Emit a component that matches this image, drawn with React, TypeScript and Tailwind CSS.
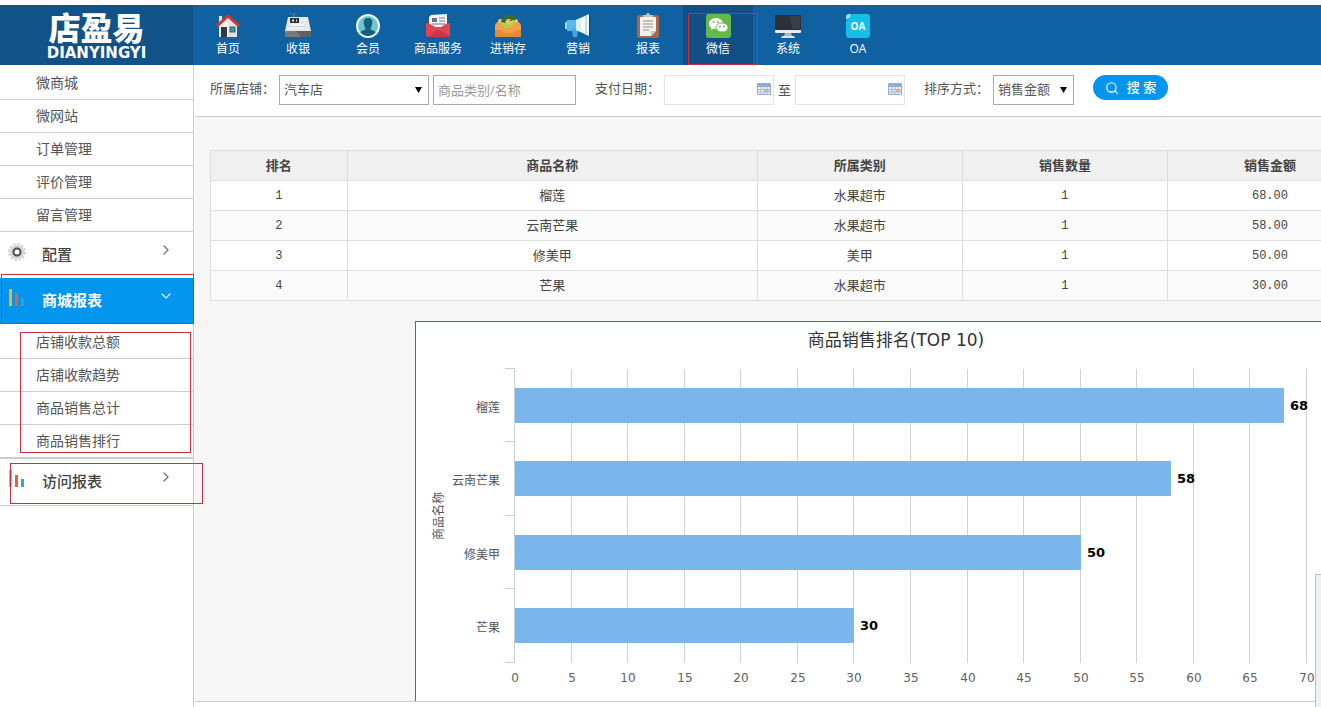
// src/App.tsx
import React from 'react';
import { ChevronDown, ChevronRight, Search } from 'lucide-react';

/* --- NAV ICONS --- */
const HomeIcon = () => (
  <svg viewBox="0 0 26 26" className="size-[26px]">
    <path d="M4 12 13 4l9 8v12H4z" fill="#f4f4f2" />
    <path d="M13 4l9 8v12h-9z" fill="#e2e4e4" />
    <path d="M4 3h3v6L4 11z" fill="#e9e9e9" />
    <path d="M13 1 1 12l2 2L13 5l10 9 2-2z" fill="#d8342f" />
    <rect x="6" y="14" width="6" height="10" fill="#33393f" />
    <rect x="15" y="14" width="5" height="5" fill="#2c9ba5" stroke="#556" strokeWidth="1" />
  </svg>
);

const CashierIcon = () => (
  <svg viewBox="0 0 28 26" className="h-[26px] w-7">
    <path d="M6 0h7v1h-2v4H9V1H6z" fill="#5d6b78" />
    <path d="M4 4h20l3 14H1z" fill="#e4e7ea" />
    <rect x="6" y="5" width="9" height="5" fill="#27323c" />
    <path d="M8 7.500h2m2 0h1" stroke="#dfe6ea" strokeWidth="2" />
    <path d="M17 7h5M6 12h14M5 15h15" stroke="#fff" strokeWidth="1" />
    <path d="M5 13.500h16" stroke="#cdd2d6" strokeWidth="1" />
    <path d="M1 18h26v6H1z" fill="#77797d" />
    <path d="M12 18h15v6H17z" fill="#5f6165" />
  </svg>
);

const MemberIcon = () => (
  <svg viewBox="0 0 26 26" className="size-[26px]">
    <circle cx="13" cy="13" r="12" fill="#e9f8f8" />
    <circle cx="13" cy="13" r="10" fill="#6fc6cc" />
    <path d="M13 5c4 0 5 3 4 7-.5 2-1.500 2.500-1.500 4 1 1.500 4 1.200 5 3.500A10 10 0 0 1 5.500 19.500c1-2.300 4-2 5-3.500 0-1.500-1-2-1.500-4-1-4 0-7 4-7z" fill="#14607f" />
  </svg>
);

const ServiceIcon = () => (
  <svg viewBox="0 0 26 26" className="size-[26px]">
    <path d="M2 11h22l-2-4H4z" fill="#a92c3a" />
    <path d="M6 2 22 1v16H4V4z" fill="#f4f4f4" />
    <path d="M7 5h5v4H7z" fill="#68717c" />
    <path d="M14 5h6m-6 3h6M7 11h13" stroke="#9aa2aa" strokeWidth="1.500" />
    <path d="M1 10c4 0 7 3 9 4h6c2-1 5-4 9-4v12q0 2-2 2H3q-2 0-2-2z" fill="#e34453" />
    <path d="m3 24 9-7h3l9 6-1 1z" fill="#cf3545" />
  </svg>
);

const StockIcon = () => (
  <svg viewBox="0 0 28 26" className="h-[26px] w-7">
    <path d="M5 6h18l4 9H1z" fill="#f2c27a" />
    <path d="M1 13q0-3 3-4l4 1c2 6 10 6 12 0l4-1q3 1 3 4v9q0 2-2 2H3q-2 0-2-2z" fill="#f0a04b" />
    <path d="M1 17h6q1 3 3 3h9q2 0 3-3h5v5q0 2-2 2H3q-2 0-2-2z" fill="#e58a35" />
    <path d="M7 9c1-6 7-9 12-6l1-2 2 6-7 1 2-2c-3-1-5 0-6 4z" fill="#356d35" />
    <path d="M21 7c1 5-4 8-9 7l-1 2-3-5 6-2-1 2c3 1 5-1 5-4z" fill="#b8ce3c" />
  </svg>
);

const MarketingIcon = () => (
  <svg viewBox="0 0 28 26" className="h-[26px] w-7">
    <path d="M1 9h3v7H1z" fill="#8edcf2" />
    <path d="M3 7h9v11H3z" fill="#59b8e4" />
    <path d="M8 16h6l-1 8H9z" fill="#4aa4d6" />
    <path d="M12 7 25 1v22l-13-6z" fill="#f5fafc" />
    <path d="M12 7l5-2v14l-5-2z" fill="#d7eef8" />
    <path d="M25 1h1v22h-1z" fill="#28404f" />
    <path d="M22 3v19" stroke="#88c4dd" strokeWidth="1" />
  </svg>
);

const ReportIcon = () => (
  <svg viewBox="0 0 26 26" className="size-[26px]">
    <rect x="2" y="2" width="22" height="23" rx="2" fill="#a5684a" />
    <path d="M5 4h16v14l-5 5H5z" fill="#f2f0ea" />
    <path d="M21 18h-5v5z" fill="#cfcac0" />
    <path d="M8 4h10V2h-3q0-2-2-2t-2 2H8z" fill="#c9c4ba" />
    <path d="M8 8h10M8 11h10M8 14h10M8 17h6" stroke="#96918a" strokeWidth="1" />
  </svg>
);

const WechatIcon = () => (
  <svg viewBox="0 0 26 26" className="size-[26px]">
    <rect x="1" y="1" width="25" height="24" rx="3" fill="#62bb46" />
    <path d="M11 5c-4 0-7 2.500-7 5.500 0 2 1 3.500 2.500 4.500L6 17l2.500-1.300 2.500.3c4 0 7-2.500 7-5.500S15 5 11 5z" fill="#fff" />
    <path d="M17 10c-3.500 0-6 2-6 4.500s2.500 4.500 6 4.500l2-.3 2.200 1.300-.5-2c1.500-1 2.300-2 2.300-3.500 0-2.500-2.500-4.500-6-4.500z" fill="#fff" stroke="#62bb46" strokeWidth="1" />
    <g fill="#62bb46">
      <circle cx="8.500" cy="9" r="1" />
      <circle cx="13" cy="9" r="1" />
      <circle cx="15" cy="13.500" r="1" />
      <circle cx="19" cy="13.500" r="1" />
    </g>
  </svg>
);

const SystemIcon = () => (
  <svg viewBox="0 0 26 26" className="size-[26px]">
    <rect x="0" y="2" width="26" height="17" rx="1" fill="#2d3038" />
    <path d="M14 3h11v13H18z" fill="#3a3e48" />
    <path d="M0 17h26v2q0 1-1 1H1q-1 0-1-1z" fill="#e6eaec" />
    <path d="M10 20h6l1 3h-8z" fill="#aeb6bb" />
    <path d="M7 23h12l1 2H6z" fill="#dfe4e7" />
  </svg>
);

const OaIcon = () => (
  <svg viewBox="0 0 26 26" className="size-[26px]">
    <path d="M7 1h15q3 0 3 3v18q0 3-3 3H4q-3 0-3-3V8z" fill="#12c0e8" />
    <path d="M1 6.500V4q0-3 3-3h2q0 4-5 5.500z" fill="#8fe6f6" />
    <text x="13" y="17" textAnchor="middle" fontSize="10" fontWeight="700" fill="#fff">
      OA
    </text>
  </svg>
);

/* --- SMALL ICONS --- */
const GearIcon = () => (
  <svg viewBox="0 0 18 18" className="mb-1 size-[18px]">
    <circle cx="9" cy="9" r="7" fill="#d3d3d6" />
    <circle cx="9" cy="9" r="8" fill="none" stroke="#d3d3d6" strokeWidth="2" strokeDasharray="2.500 1.690" />
    <circle cx="9" cy="9" r="3.500" fill="#fff" stroke="#4a4d55" strokeWidth="2" />
  </svg>
);

const BarsIcon = () => (
  <svg viewBox="0 0 18 18" className="mb-1 size-[18px]">
    <rect x="1" y="0" width="3" height="17" fill="#f0b323" />
    <rect x="7" y="5" width="3" height="12" fill="#e8603c" />
    <rect x="13" y="9" width="3" height="8" fill="#3a9fd0" />
  </svg>
);

const CalendarIcon = () => (
  <svg viewBox="0 0 14 12" className="pointer-events-none absolute top-2 right-[3px] h-3 w-3.5">
    <rect width="14" height="12" rx="1" fill="#93abcf" />
    <rect x="1" y="4" width="12" height="7" fill="#eef3f9" />
    <path d="M1 6.500h12M1 9h12M4 4v7M7 4v7M10 4v7" stroke="#a9bbd6" strokeWidth="1" />
    <rect x="8" y="7" width="4" height="2" fill="#e8a39c" />
  </svg>
);

/* --- DATA --- */
const NAV = [
  { label: '首页', icon: <HomeIcon /> },
  { label: '收银', icon: <CashierIcon /> },
  { label: '会员', icon: <MemberIcon /> },
  { label: '商品服务', icon: <ServiceIcon /> },
  { label: '进销存', icon: <StockIcon /> },
  { label: '营销', icon: <MarketingIcon /> },
  { label: '报表', icon: <ReportIcon /> },
  { label: '微信', icon: <WechatIcon />, active: true },
  { label: '系统', icon: <SystemIcon /> },
  { label: 'OA', icon: <OaIcon /> },
];

const SHOP_LINKS = ['微商城', '微网站', '订单管理', '评价管理', '留言管理'];
const REPORT_LINKS = ['店铺收款总额', '店铺收款趋势', '商品销售总计', '商品销售排行'];

const ROWS = [
  { name: '榴莲', category: '水果超市', count: 1, amount: 68 },
  { name: '云南芒果', category: '水果超市', count: 1, amount: 58 },
  { name: '修美甲', category: '美甲', count: 1, amount: 50 },
  { name: '芒果', category: '水果超市', count: 1, amount: 30 },
];

/* --- SIDEBAR PARTS --- */
const SubLink: React.FC<{ label: string }> = ({ label }) => (
  <li>
    <a href="#" className="flex h-[33px] items-center border-b border-[#ccc] pl-9 text-sm text-[#555]">
      {label}
    </a>
  </li>
);

const GroupLink: React.FC<{ label: string; icon: React.ReactNode; open?: boolean }> = ({ label, icon, open }) => (
  <a
    href="#"
    className={
      open
        ? 'flex h-[46px] items-center bg-[#0495ee] pr-[19px] pb-0.5 pl-2 text-[15px] font-bold text-white'
        : 'flex h-[46px] items-center pr-[19px] pb-0.5 pl-2 text-[15px] font-medium text-[#444]'
    }
  >
    {icon}
    <span className="ml-4 flex-1">{label}</span>
    {open ? (
      <ChevronDown className="mb-2 size-4 text-white/80" strokeWidth={2} />
    ) : (
      <ChevronRight className="mb-2 size-4 text-[#777]" strokeWidth={2} />
    )}
  </a>
);

/* --- FILTER PARTS --- */
const DateField: React.FC<{ label: string }> = ({ label }) => (
  <span className="relative">
    <input type="text" aria-label={label} className="h-[30px] w-[110px] border border-[#e1e4ec] bg-white px-1 outline-none" />
    <CalendarIcon />
  </span>
);

const SelectArrow = () => (
  <svg viewBox="0 0 8 8" className="pointer-events-none absolute top-[11px] right-1.5 size-2">
    <path d="M0 1h7L3.500 7z" fill="#000" />
  </svg>
);

/* --- CHART --- */
const ZERO_X = 99;
const UNIT = 11.314;
const TOP_Y = 47;
const BAND = 73.5;

const SalesChart = () => {
  const ticks = Array.from({ length: 15 }, (_, i) => i * 5);
  return (
    <svg width="960" height="379" className="block" fontFamily="'DejaVu Sans', 'Noto Sans CJK SC', sans-serif">
      <text x="480" y="24" textAnchor="middle" fontSize="17" fill="#333">
        商品销售排名(TOP 10)
      </text>
      <text x="27" y="194" textAnchor="middle" fontSize="12" fill="#555" transform="rotate(-90 27 194)">
        商品名称
      </text>
      {ticks.map((t) => (
        <g key={t}>
          <path
            d={`M${Math.round(ZERO_X + t * UNIT) - 0.5} ${TOP_Y}v294`}
            stroke={t === 0 ? '#c0d0e0' : '#d0d0d0'}
            shapeRendering="crispEdges"
          />
          <text x={Math.round(ZERO_X + t * UNIT)} y="360" textAnchor="middle" fontSize="12" fill="#606060">
            {t}
          </text>
        </g>
      ))}
      {[0, 1, 2, 3, 4].map((i) => (
        <path key={i} d={`M89 ${Math.floor(TOP_Y + i * BAND) - 0.5}h10`} stroke="#c0d0e0" />
      ))}
      {ROWS.map((row, i) => {
        const y = Math.floor(66 + i * BAND);
        const width = Math.round(row.amount * UNIT);
        return (
          <g key={row.name}>
            <rect x={ZERO_X} y={y} width={width} height="35" fill="#7cb5ec" />
            <text x="84" y={y + 24} textAnchor="end" fontSize="12" fill="#555">
              {row.name}
            </text>
            <text x={ZERO_X + width + 6} y={y + 22} fontSize="13" fontWeight="700" fill="#000">
              {row.amount}
            </text>
          </g>
        );
      })}
    </svg>
  );
};

const App: React.FC = () => {
  return (
    <div className="relative flex min-h-screen flex-col overflow-hidden bg-white pt-[5px] font-['Open_Sans','Noto_Sans_CJK_SC',sans-serif] text-[13px] text-[#555]">
      {/* --- HEADER --- */}
      <header className="flex h-[60px] bg-[#0f61a1] text-white">
        <a href="#" className="flex w-[193px] shrink-0 flex-col items-center justify-center gap-0.5 bg-[#115288] pt-1">
          <span className="text-[32px] leading-[30px] font-black">店盈易</span>
          <span className="font-['DejaVu_Sans',sans-serif] text-[15px] leading-4 font-bold">DIANYINGYI</span>
        </a>
        <nav className="flex">
          {NAV.map((item) => (
            <a
              key={item.label}
              href="#"
              className={
                item.active
                  ? 'relative flex w-[70px] flex-col items-center bg-[#114f86] pt-2 text-xs'
                  : 'flex w-[70px] flex-col items-center pt-2 text-xs'
              }
            >
              {item.icon}
              <span className="mt-0.5 leading-4">{item.label}</span>
              {item.active && <span className="absolute top-2 left-[5px] h-[52px] w-[70px] border border-[#c8303c]" />}
            </a>
          ))}
        </nav>
      </header>

      <div className="flex flex-1">
        {/* --- SIDEBAR --- */}
        <aside className="w-[194px] shrink-0 border-r border-[#ccc] pt-0.5">
          <ul>
            {SHOP_LINKS.map((label) => (
              <SubLink key={label} label={label} />
            ))}
          </ul>
          <GroupLink label="配置" icon={<GearIcon />} />
          <div className="relative">
            <GroupLink label="商城报表" icon={<BarsIcon />} open />
            <span className="pointer-events-none absolute -top-1 left-px h-[50px] w-[193px] border border-[#c8303c]" />
          </div>
          <div className="relative border-b border-[#ccc] pt-0.5">
            <ul>
              {REPORT_LINKS.map((label) => (
                <SubLink key={label} label={label} />
              ))}
            </ul>
            <span className="pointer-events-none absolute top-2 left-5 h-[121px] w-[171px] border border-[#c8303c]" />
          </div>
          <div className="relative border-b border-[#ccc]">
            <GroupLink label="访问报表" icon={<BarsIcon />} />
            <span className="pointer-events-none absolute top-1 left-2.5 h-[41px] w-[193px] border border-[#c8303c]" />
          </div>
        </aside>

        <main className="mb-[5px] ml-px min-w-0 flex-1 overflow-hidden border-b border-[#ccc] bg-[#f6f6f6]">
          {/* --- FILTER BAR --- */}
          <form className="flex h-[52px] items-start gap-[19px] border-b border-[#ccc] bg-white pt-2.5 pl-[15px] whitespace-nowrap">
            <div className="flex gap-1">
              <label htmlFor="shop" className="leading-[26px]">
                所属店铺：
              </label>
              <span className="relative">
                <select id="shop" className="h-[30px] w-[150px] appearance-none border border-[#a9a9a9] bg-white pl-1">
                  <option>汽车店</option>
                </select>
                <SelectArrow />
              </span>
              <input
                type="text"
                aria-label="商品类别/名称"
                placeholder="商品类别/名称"
                className="h-[30px] w-[143px] border border-[#a9a9a9] bg-white px-1 outline-none placeholder:text-[#999]"
              />
            </div>
            <div className="flex gap-1">
              <span className="leading-[26px]">支付日期：</span>
              <DateField label="开始日期" />
              <span className="leading-[30px]">至</span>
              <DateField label="结束日期" />
            </div>
            <div className="flex gap-1">
              <label htmlFor="sort" className="leading-[26px]">
                排序方式：
              </label>
              <span className="relative">
                <select id="sort" className="h-[30px] w-[81px] appearance-none border border-[#a9a9a9] bg-white pl-1">
                  <option>销售金额</option>
                </select>
                <SelectArrow />
              </span>
            </div>
            <button type="button" className="flex h-[25px] w-[75px] items-center justify-center gap-2 rounded-full bg-[#0495ee] font-medium text-white">
              <Search className="size-3.5" strokeWidth={2} />
              搜 索
            </button>
          </form>

          {/* --- RANKING TABLE --- */}
          <div className="pt-[33px] pl-[15px]">
            <table className="w-[1163px] table-fixed border-collapse text-center text-[#444] [&_td]:border [&_td]:border-[#ddd] [&_th]:border [&_th]:border-[#ddd]">
              <thead>
                <tr className="h-[30px] bg-[#f0f0f0]">
                  <th className="w-2/17">排名</th>
                  <th className="w-6/17">商品名称</th>
                  <th className="w-3/17">所属类别</th>
                  <th className="w-3/17">销售数量</th>
                  <th className="w-3/17">销售金额</th>
                </tr>
              </thead>
              <tbody>
                {ROWS.map((row, i) => (
                  <tr key={row.name} className="h-[30px] bg-white even:bg-[#fafafa]">
                    <td className="font-['Liberation_Mono',monospace] text-xs">{i + 1}</td>
                    <td>{row.name}</td>
                    <td>{row.category}</td>
                    <td className="font-['Liberation_Mono',monospace] text-xs">{row.count}</td>
                    <td className="font-['Liberation_Mono',monospace] text-xs">{row.amount.toFixed(2)}</td>
                  </tr>
                ))}
              </tbody>
            </table>

            <section className="mt-5 ml-[205px] w-[962px] border border-b-0 border-[#44708f] bg-white">
              <SalesChart />
            </section>
          </div>
        </main>
      </div>

      {/* Collapsed side drawer */}
      <div className="absolute right-0 bottom-0 h-[133px] w-1.5 border-t border-l border-[#b4c3cd] bg-[#edf1f4]" />
    </div>
  );
};

export default App;
